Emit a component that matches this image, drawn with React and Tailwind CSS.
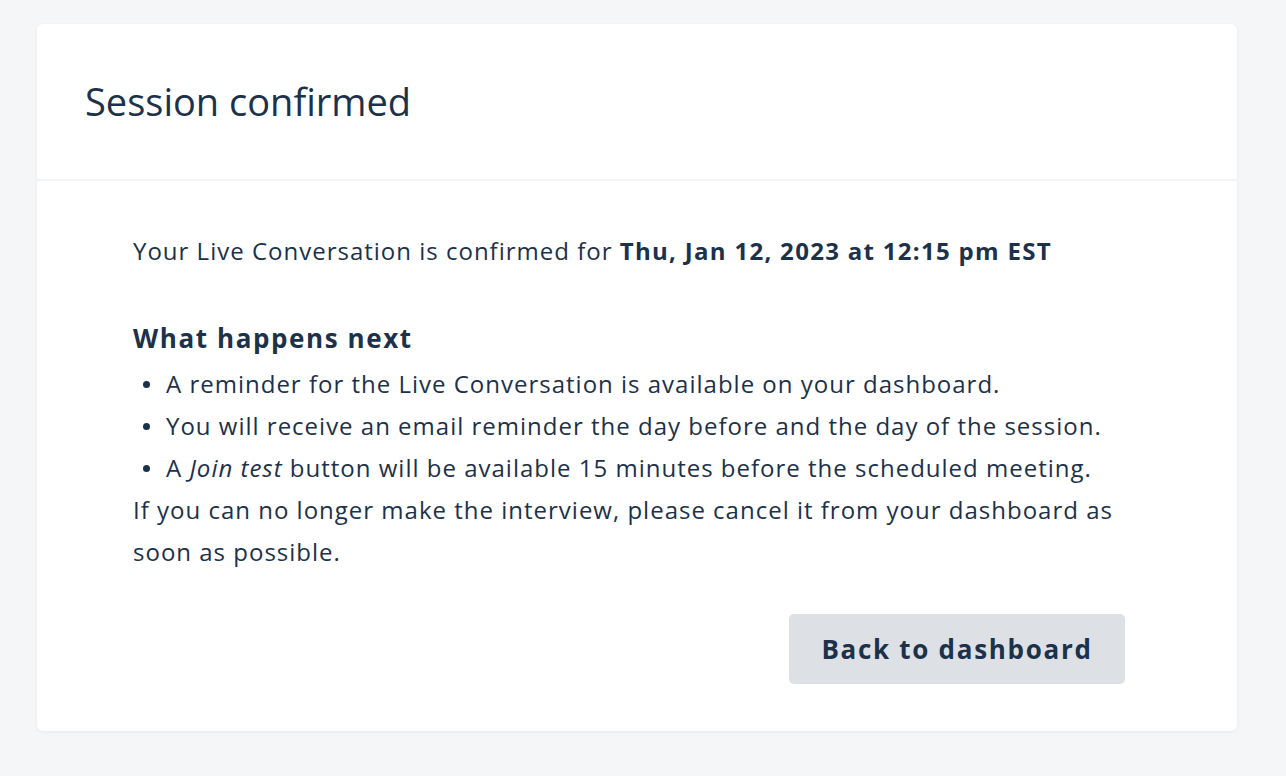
import React from "react";

const items = [
    <>A reminder for the Live Conversation is available on your dashboard.</>,
    <>You will receive an email reminder the day before and the day of the session.</>,
    <>
        A <em>Join test</em> button will be available 15 minutes before the scheduled meeting.
    </>,
];

export default function App() {
    return (
        <div
            className="min-h-screen bg-[#f5f6f8] pt-[24px] pl-[37px] pr-[49px] text-[#1c314a]"
            style={{ fontFamily: "'Open Sans', sans-serif" }}
        >
            <div className="bg-white rounded-[6px] shadow-[0_1px_4px_rgba(0,0,0,0.06)]">
                {/* Header */}
                <div className="h-[157px] flex items-center pl-[48px] pb-[2px] border-b-2 border-[#f1f3f5]">
                    <h1 className="text-[38px] font-normal leading-[48px]">Session confirmed</h1>
                </div>

                {/* Body */}
                <div className="pt-[49px] pb-[47px] pl-[96px] pr-[112px] text-[24px] leading-[42px] tracking-[1px]">
                    <p>
                        Your Live Conversation is confirmed for{" "}
                        <strong className="font-bold tracking-[1.3px]">Thu, Jan 12, 2023 at 12:15 pm EST</strong>
                    </p>

                    <h2 className="mt-[45px] mb-[4px] text-[26px] font-bold leading-[42px] tracking-[1.6px]">
                        What happens next
                    </h2>
                    <ul>
                        {items.map((item, i) => (
                            <li key={i} className="flex items-center">
                                <span className="w-[7px] h-[7px] rounded-full bg-[#1c314a] ml-[10px] mr-[16px] shrink-0"></span>
                                <span>{item}</span>
                            </li>
                        ))}
                    </ul>
                    <p>
                        If you can no longer make the interview, please cancel it from your dashboard as soon as
                        possible.
                    </p>

                    <div className="flex justify-end mt-[41px]">
                        <button className="w-[336px] h-[70px] rounded-[5px] bg-[#dde0e5] text-[26px] font-bold tracking-[1.7px] text-[#1c314a]">
                            Back to dashboard
                        </button>
                    </div>
                </div>
            </div>
        </div>
    );
}
